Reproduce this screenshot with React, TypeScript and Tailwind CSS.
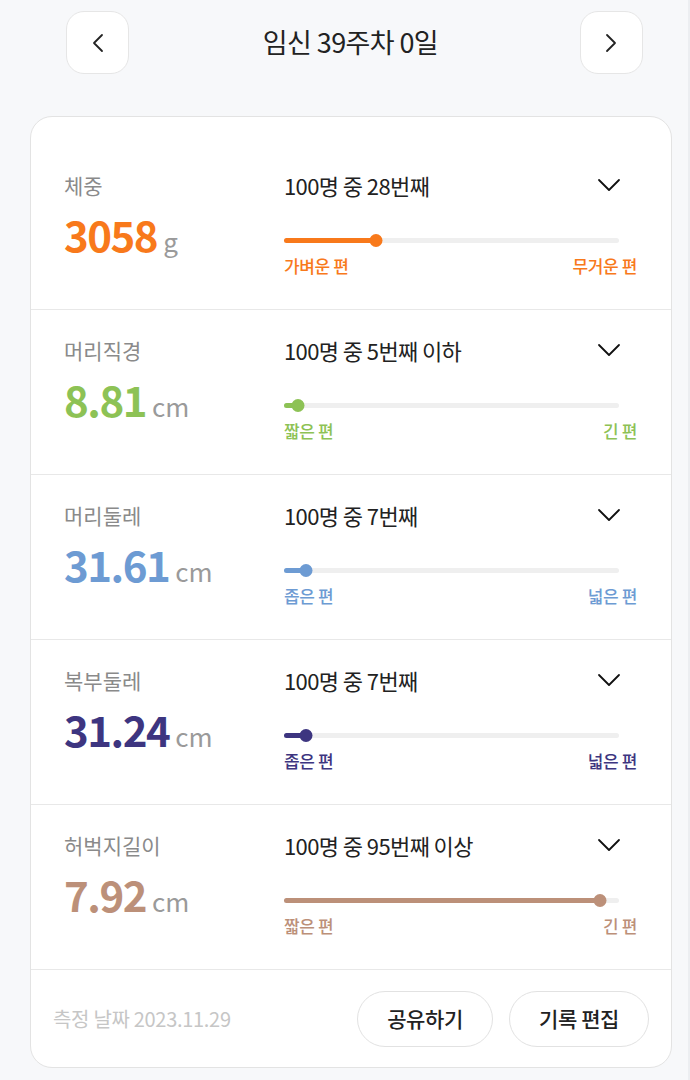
import React from "react";

type Metric = {
  label: string;
  value: string;
  unit: string;
  rank: string;
  pct: number;
  low: string;
  high: string;
  color: string;
};

const metrics: Metric[] = [
  { label: "체중", value: "3058", unit: "g", rank: "100명 중 28번째", pct: 27.5, low: "가벼운 편", high: "무거운 편", color: "#f8791b" },
  { label: "머리직경", value: "8.81", unit: "cm", rank: "100명 중 5번째 이하", pct: 4.2, low: "짧은 편", high: "긴 편", color: "#8dc255" },
  { label: "머리둘레", value: "31.61", unit: "cm", rank: "100명 중 7번째", pct: 6.6, low: "좁은 편", high: "넓은 편", color: "#6d9bd3" },
  { label: "복부둘레", value: "31.24", unit: "cm", rank: "100명 중 7번째", pct: 6.6, low: "좁은 편", high: "넓은 편", color: "#3d3580" },
  { label: "허벅지길이", value: "7.92", unit: "cm", rank: "100명 중 95번째 이상", pct: 94.3, low: "짧은 편", high: "긴 편", color: "#bc9079" },
];

function NavButton({ dir }: { dir: "left" | "right" }) {
  return (
    <button className="flex h-[63px] w-[63px] items-center justify-center rounded-[18px] border border-[#e6e6e6] bg-white">
      <svg width="12" height="20" viewBox="0 0 12 20" fill="none">
        <polyline
          points={dir === "left" ? "10,2 2,10 10,18" : "2,2 10,10 2,18"}
          stroke="#222"
          strokeWidth="1.8"
          strokeLinecap="round"
          strokeLinejoin="round"
        />
      </svg>
    </button>
  );
}

function MetricRow({ m }: { m: Metric }) {
  return (
    <div className="flex h-[165px] border-b border-[#e8e8e8] pl-[33px] pr-[34px]">
      <div className="w-[220px] pt-[26px]">
        <div className="text-[21px] leading-[28px] text-[#8a8a8a]">{m.label}</div>
        <div className="mt-[11px] flex items-baseline leading-[48px]">
          <span className="text-[42px] font-bold tracking-[-1.5px]" style={{ color: m.color }}>
            {m.value}
          </span>
          <span className="ml-[6px] text-[26px] text-[#9a9a9a]">{m.unit}</span>
        </div>
      </div>
      <div className="flex-1 pt-[26px]">
        <div className="flex h-[28px] items-center justify-between">
          <span className="text-[22px] tracking-[-0.6px] text-[#222]">{m.rank}</span>
          <svg className="mr-[16px]" width="24" height="14" viewBox="0 0 24 14" fill="none">
            <polyline points="2,2 12,12 22,2" stroke="#111" strokeWidth="1.8" strokeLinecap="round" strokeLinejoin="round" />
          </svg>
        </div>
        <div className="relative mr-[18px] mt-[34px] h-[14px]">
          <div className="absolute left-0 right-0 top-[4.5px] h-[5px] rounded-full bg-[#efefef]" />
          <div
            className="absolute left-0 top-[4.5px] h-[5px] rounded-full"
            style={{ width: `${m.pct}%`, backgroundColor: m.color }}
          />
          <div
            className="absolute top-[0.5px] h-[13px] w-[13px] -translate-x-1/2 rounded-full"
            style={{ left: `${m.pct}%`, backgroundColor: m.color }}
          />
        </div>
        <div
          className="mt-[8px] flex justify-between text-[17px] font-medium leading-[22px] tracking-[-0.4px]"
          style={{ color: m.color }}
        >
          <span>{m.low}</span>
          <span>{m.high}</span>
        </div>
      </div>
    </div>
  );
}

export default function App() {
  return (
    <div className="min-h-[1080px] w-[690px] border-r-2 border-[#eceef1] bg-[#f7f8fa] font-['Noto_Sans_CJK_KR','Noto_Sans',sans-serif]">
      <header className="flex h-[116px] items-start justify-between pl-[66px] pr-[45px] pt-[11px]">
        <NavButton dir="left" />
        <h1 className="mr-[8px] flex h-[63px] items-center text-[27px] tracking-[-0.6px] text-[#222]">임신 39주차 0일</h1>
        <NavButton dir="right" />
      </header>

      <div className="ml-[30px] w-[642px] rounded-[22px] border border-[#e3e3e3] bg-white pt-[28px]">
        {metrics.map((m) => (
          <MetricRow key={m.label} m={m} />
        ))}
        <div className="flex h-[97px] items-center justify-between pl-[22px] pr-[22px]">
          <span className="text-[20px] tracking-[-0.3px] text-[#c6c6c6]">측정 날짜 2023.11.29</span>
          <div className="flex gap-[16px]">
            <button className="h-[56px] w-[136px] rounded-full border border-[#e2e2e2] bg-white text-[21px] font-medium tracking-[-0.4px] text-[#222]">
              공유하기
            </button>
            <button className="h-[56px] w-[140px] rounded-full border border-[#e2e2e2] bg-white text-[21px] font-medium tracking-[-0.4px] text-[#222]">
              기록 편집
            </button>
          </div>
        </div>
      </div>
    </div>
  );
}
